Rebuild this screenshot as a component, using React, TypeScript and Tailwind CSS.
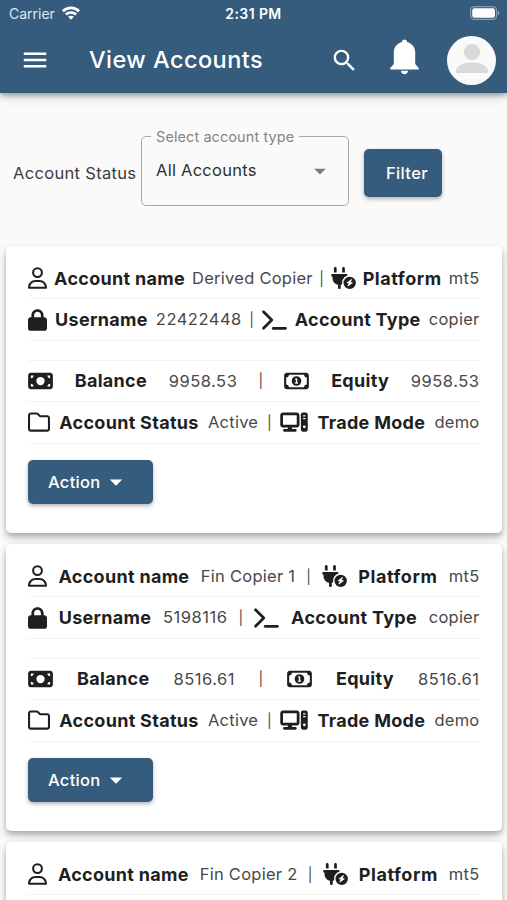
import React from 'react';
import {
  FaComputer,
  FaLock,
  FaMoneyBill,
  FaPlugCircleBolt,
  FaRegFolder,
  FaRegMoneyBill1,
  FaRegUser,
  FaTerminal,
} from 'react-icons/fa6';
import { MdArrowDropDown, MdMenu, MdSearch } from 'react-icons/md';

interface Account {
  name: string;
  platform: string;
  username: string;
  type: string;
  balance: string;
  equity: string;
  status: string;
  mode: string;
}

const accounts: Account[] = [
  { name: 'Derived Copier', platform: 'mt5', username: '22422448', type: 'copier', balance: '9958.53', equity: '9958.53', status: 'Active', mode: 'demo' },
  { name: 'Fin Copier 1', platform: 'mt5', username: '5198116', type: 'copier', balance: '8516.61', equity: '8516.61', status: 'Active', mode: 'demo' },
];

function StatusBar() {
  return (
    <div className="flex h-[27px] items-center justify-between pb-px pl-[9px] pr-[7px]">
      <div className="flex w-[180px] items-center gap-[6px]">
        <span className="w-[47px] pt-[2px] text-[14px] leading-none text-[#dfe7ee]">Carrier</span>
        <svg className="h-[14px] w-[18px]" viewBox="0 0 19 14" fill="none" stroke="white" strokeWidth="2.8">
          <path d="M1 5.1C5.7.4 13.3.4 18 5.1" />
          <path d="M4.1 8.6C7.1 5.7 11.9 5.7 14.9 8.6" />
          <path d="M9.5 14 6.5 11C8.2 9.5 10.8 9.5 12.5 11Z" fill="white" stroke="none" />
        </svg>
      </div>
      <span className="pr-[2px] pt-px text-[14px] font-semibold leading-none tracking-[0.4px] text-white">2:31 PM</span>
      <div className="flex w-[180px] justify-end">
        <svg className="h-[14px] w-[30px]" viewBox="0 0 30 14">
          <rect x="0.6" y="0.6" width="26" height="12.8" rx="3.6" fill="none" stroke="white" strokeOpacity="0.4" strokeWidth="1.2" />
          <rect x="2.2" y="2.2" width="22.8" height="9.6" rx="2.2" fill="white" />
          <path d="M28 4.8C29.6 5.4 29.6 8.6 28 9.2Z" fill="white" fillOpacity="0.5" />
        </svg>
      </div>
    </div>
  );
}

function Header() {
  return (
    <header className="relative z-10 h-[93px] bg-[#355c7d] text-white shadow-[0_2px_5px_rgba(0,0,0,0.3),0_4px_10px_rgba(0,0,0,0.16)]">
      <StatusBar />
      <div className="flex h-[66px] items-center pl-5 pr-[11px]">
        <MdMenu className="h-[30px] w-[30px]" />
        <h1 className="ml-[39px] flex-1 whitespace-nowrap text-[23.5px] font-medium leading-none tracking-[0.45px]">View Accounts</h1>
        <MdSearch className="mr-[31px] h-[29px] w-[29px]" />
        <svg className="mb-[7px] mr-[28px] h-[36px] w-[29px]" viewBox="0 0 29 36" fill="white">
          <path d="M14.5 .5c1.5 0 2.5 1 2.5 2.6C21.8 4.3 25.2 8.2 25.2 13.5V25L28.7 29V30.5H.3V29L3.8 25V13.5C3.8 8.2 7.2 4.3 12 3.1 12 1.5 13 .5 14.5 .5Z" />
          <path d="M10.9 31.7H18.1C17.8 33.9 16.4 35.3 14.5 35.3S11.2 33.9 10.9 31.7Z" />
        </svg>
        <div className="flex h-[49px] w-[49px] items-center justify-center rounded-full bg-[#fafafa]">
          <svg className="mb-[3px] h-[29px] w-[32px]" viewBox="0 0 32 29" fill="#d9d9d9">
            <circle cx="16" cy="8" r="8" />
            <path d="M0 29V26.5C0 21.5 8.5 18.5 16 18.5S32 21.5 32 26.5V29Z" />
          </svg>
        </div>
      </div>
    </header>
  );
}

function Filters() {
  return (
    <div className="flex h-[153px] items-start pl-[13px] pt-[34px]">
      <span className="w-[128px] whitespace-nowrap pt-[35px] text-[16.5px] leading-[22px] tracking-[0.32px] text-[#3c3c3c]">Account Status</span>
      <fieldset className="h-[79px] w-[208px] rounded-[5px] border border-[#a8a8a8] pl-[6px]">
        <legend className="ml-[3px] px-[5px] text-[14.5px] leading-[19px] tracking-[0.08px] text-[#858585]">Select account type</legend>
        <div className="mt-[9px] flex h-[30px] items-center justify-between pl-2 pr-[13px]">
          <span className="text-[16.5px] tracking-[0.25px] text-[#303030]">All Accounts</span>
          <MdArrowDropDown className="mt-[2px] h-[28px] w-[30px] text-[#7c7c7c]" />
        </div>
      </fieldset>
      <button className="ml-[15px] mt-[22px] h-[48px] w-[78px] rounded-[5px] bg-[#355c7d] pl-2 text-[16.5px] font-medium tracking-[0.4px] text-white shadow-[0_2px_4px_rgba(0,0,0,0.3)]">
        Filter
      </button>
    </div>
  );
}

function Row({ children }: { children: React.ReactNode }) {
  return (
    <div className="flex h-[41.4px] items-center justify-between whitespace-nowrap border-b border-[#f3f3f3] pr-[0.5px] text-[#1f1f1f]">
      {children}
    </div>
  );
}

function Label({ children, wide }: { children: React.ReactNode; wide?: boolean }) {
  return (
    <span className={wide ? 'text-[18px] font-bold tracking-[0.55px]' : 'text-[18px] font-bold tracking-[0.3px]'}>
      {children}
    </span>
  );
}

function Value({ children }: { children: React.ReactNode }) {
  return <span className="text-[16.5px] tracking-[0.25px] text-[#484848]">{children}</span>;
}

function Amount({ children }: { children: React.ReactNode }) {
  return <span className="text-[16.5px] tracking-[0.5px] text-[#484848]">{children}</span>;
}

function Divider() {
  return <span className="-mx-[0.5px] text-[14px] text-[#484848]">|</span>;
}

function NameRow({ name, platform }: { name: string; platform: string }) {
  return (
    <Row>
      <FaRegUser className="h-[22px] w-[19px]" />
      <Label>Account name</Label>
      <Value>{name}</Value>
      <Divider />
      <FaPlugCircleBolt className="h-[22px] w-[25px]" />
      <Label wide>Platform</Label>
      <Value>{platform}</Value>
    </Row>
  );
}

function AccountCard({ account }: { account: Account }) {
  return (
    <section className="h-[287px] shrink-0 rounded-[5px] bg-white px-[22px] pt-[12px] shadow-[0_3px_5px_rgba(0,0,0,0.2),0_5px_10px_rgba(0,0,0,0.16)]">
      <NameRow name={account.name} platform={account.platform} />
      <Row>
        <FaLock className="h-[22px] w-[19px]" />
        <Label>Username</Label>
        <Amount>{account.username}</Amount>
        <Divider />
        <FaTerminal className="h-[22px] w-[25px]" />
        <Label>Account Type</Label>
        <Value>{account.type}</Value>
      </Row>
      <div className="h-[20px] border-b border-[#f3f3f3]" />
      <Row>
        <FaMoneyBill className="h-[22px] w-[25px]" />
        <Label>Balance</Label>
        <Amount>{account.balance}</Amount>
        <Divider />
        <FaRegMoneyBill1 className="h-[22px] w-[25px]" />
        <Label>Equity</Label>
        <Amount>{account.equity}</Amount>
      </Row>
      <Row>
        <FaRegFolder className="h-[22px] w-[22px]" />
        <Label>Account Status</Label>
        <Value>{account.status}</Value>
        <Divider />
        <FaComputer className="h-[22px] w-[28px]" />
        <Label>Trade Mode</Label>
        <Value>{account.mode}</Value>
      </Row>
      <button className="mt-[16px] flex h-[44px] w-[125px] items-center rounded-[5px] bg-[#355c7d] pl-5 pt-px text-[16.5px] font-medium tracking-[0.3px] text-white shadow-[0_2px_4px_rgba(0,0,0,0.3)]">
        Action
        <MdArrowDropDown className="h-[30px] w-[30px]" />
      </button>
    </section>
  );
}

export default function App() {
  return (
    <div className="h-[900px] w-[507px] overflow-hidden bg-[#fafafa] font-['Inter','Liberation_Sans',sans-serif]">
      <Header />
      <Filters />
      <main className="flex flex-col gap-[11px] pl-[6px] pr-[5px]">
        {accounts.map((account) => (
          <AccountCard key={account.name} account={account} />
        ))}
        {/* next card, still below the fold */}
        <section className="h-[287px] shrink-0 rounded-[5px] bg-white px-[22px] pt-[12px] shadow-[0_3px_5px_rgba(0,0,0,0.2),0_5px_10px_rgba(0,0,0,0.16)]">
          <NameRow name="Fin Copier 2" platform="mt5" />
        </section>
      </main>
    </div>
  );
}
